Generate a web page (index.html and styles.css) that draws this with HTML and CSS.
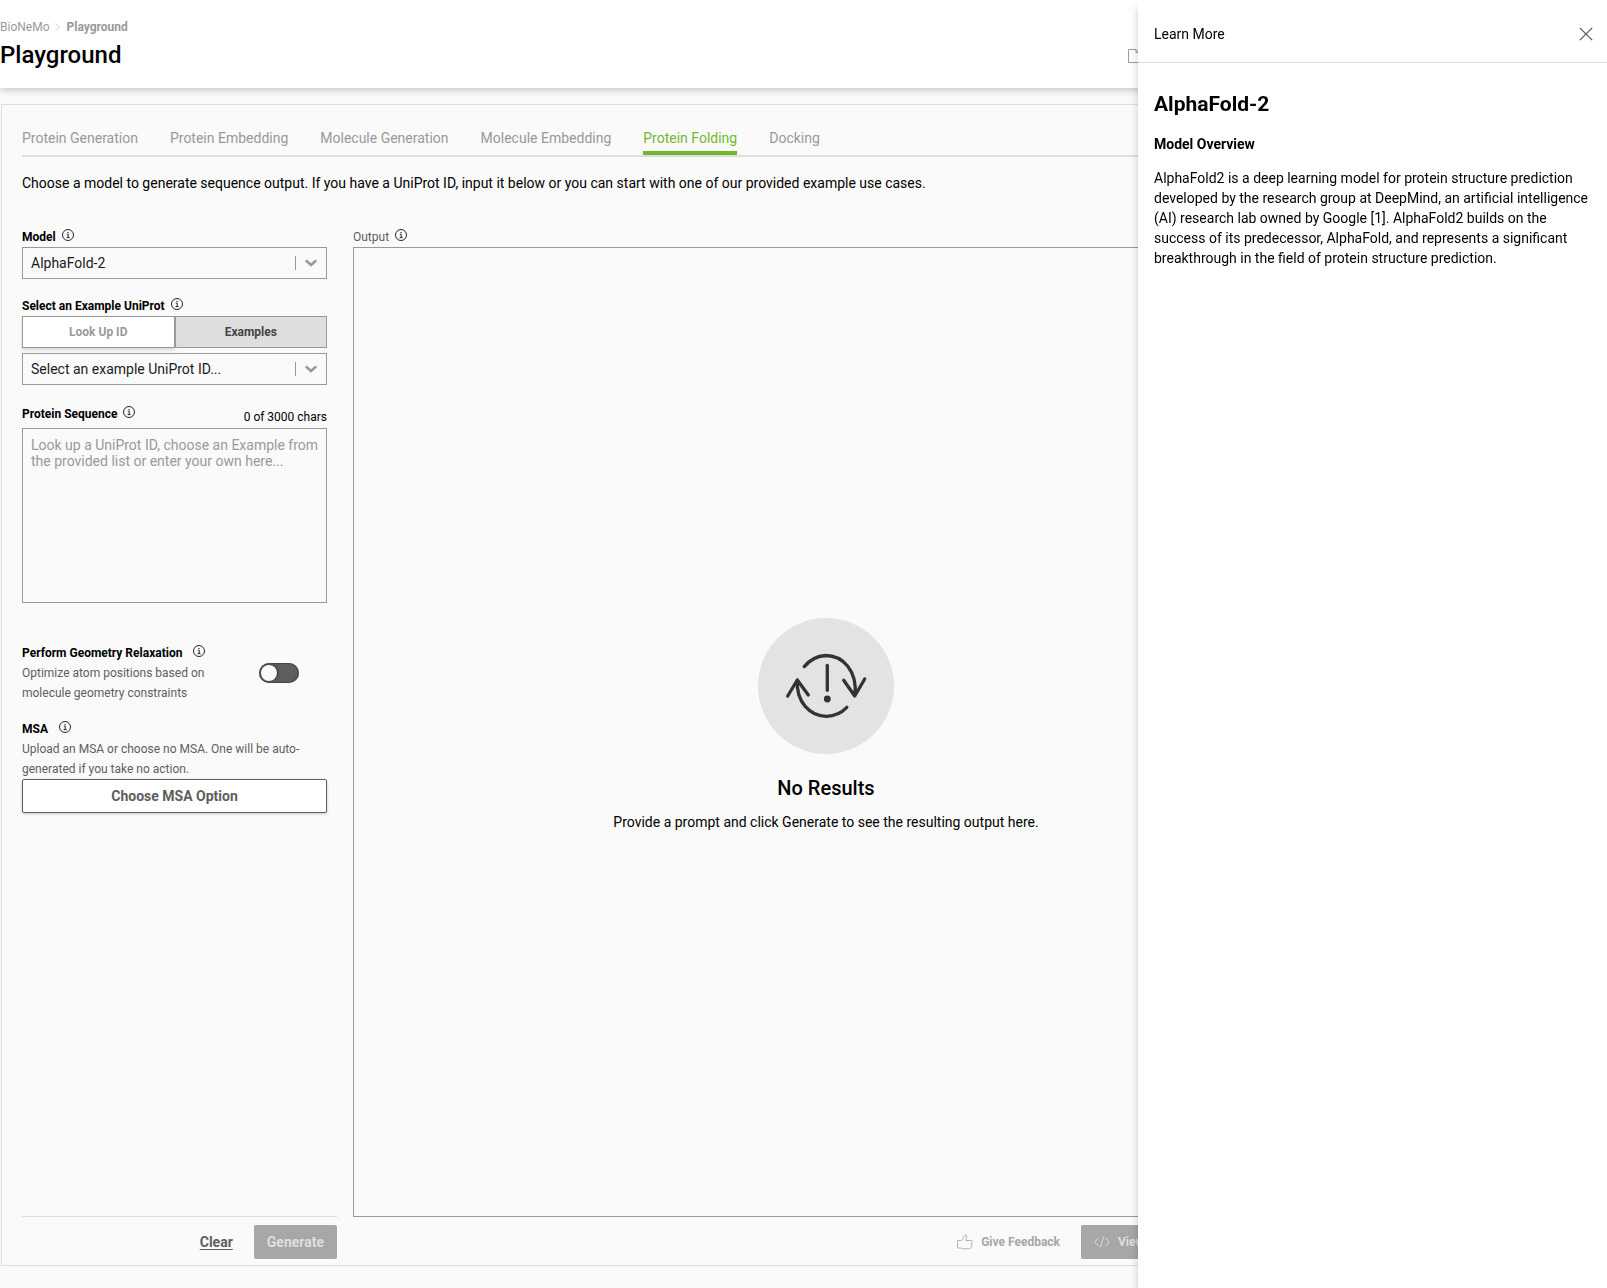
FILE: index.html
```html
<!DOCTYPE html>
<html lang="en">
<head>
<meta charset="utf-8">
<meta name="viewport" content="width=device-width, initial-scale=1">
<title>BioNeMo Playground</title>
<link rel="stylesheet" href="styles.css">
</head>
<body>
<svg class="sprite" width="0" height="0" aria-hidden="true">
  <symbol id="info" viewBox="0 0 12 12">
    <circle cx="6" cy="6" r="5.5" fill="none" stroke="currentColor" stroke-width=".9"/>
    <path d="M4.8 5.2h1.4v3.4M4.6 8.6h3" fill="none" stroke="currentColor" stroke-width=".9"/>
    <path d="M5.5 3h1.1v1.1H5.5z" fill="currentColor"/>
  </symbol>
  <symbol id="chevron" viewBox="0 0 12 8">
    <path d="M1.500 2 6 6l4.500-4" fill="none" stroke="currentColor" stroke-width="2.500" stroke-linecap="round"/>
  </symbol>
</svg>

<div class="app">
  <header class="page-header">
    <div>
      <nav class="breadcrumbs" aria-label="Breadcrumb">
        <a href="#">BioNeMo</a>
        <svg width="5" height="8" viewBox="0 0 5 8" aria-hidden="true"><path d="M.7.5 4.200 4 .7 7.500" fill="none" stroke="#bbb" stroke-width=".7"/></svg>
        <a href="#" class="current">Playground</a>
      </nav>
      <h1>Playground</h1>
    </div>
    <a href="#" class="docs-link" aria-label="Documentation">
      <svg width="14" height="14" viewBox="0 0 14 14" aria-hidden="true"><path d="M.5.500h7.500l4 4v9H.5zM8 .5v3h4" fill="none" stroke="#999"/></svg>
    </a>
  </header>

  <main class="panel">
    <nav class="tabs" aria-label="Tasks">
      <a href="#">Protein Generation</a>
      <a href="#">Protein Embedding</a>
      <a href="#">Molecule Generation</a>
      <a href="#">Molecule Embedding</a>
      <a href="#" class="active">Protein Folding</a>
      <a href="#">Docking</a>
    </nav>
    <p class="intro">Choose a model to generate sequence output. If you have a UniProt ID, input it below or you can start with one of our provided example use cases.</p>

    <div class="columns">
      <form class="inputs">
        <div class="fields">
          <div class="field">
            <div class="label-row"><label for="model">Model</label><svg class="info"><use href="#info"/></svg></div>
            <div class="select">
              <select id="model"><option>AlphaFold-2</option></select>
              <svg class="chevron" aria-hidden="true"><use href="#chevron"/></svg>
            </div>
          </div>

          <div class="field">
            <div class="label-row"><label for="example">Select an Example UniProt</label><svg class="info"><use href="#info"/></svg></div>
            <div class="segmented">
              <button type="button">Look Up ID</button>
              <button type="button" class="selected">Examples</button>
            </div>
            <div class="select">
              <select id="example"><option>Select an example UniProt ID...</option></select>
              <svg class="chevron" aria-hidden="true"><use href="#chevron"/></svg>
            </div>
          </div>

          <div class="field">
            <div class="sequence-head">
              <div class="label-row"><label for="sequence">Protein Sequence</label><svg class="info"><use href="#info"/></svg></div>
              <span class="count">0 of 3000 chars</span>
            </div>
            <textarea id="sequence" placeholder="Look up a UniProt ID, choose an Example from the provided list or enter your own here..."></textarea>
          </div>

          <div class="relaxation">
            <div class="relaxation-text">
              <div class="label-row wide"><label for="relax">Perform Geometry Relaxation</label><svg class="info"><use href="#info"/></svg></div>
              <p class="hint">Optimize atom positions based on molecule geometry constraints</p>
            </div>
            <input type="checkbox" role="switch" id="relax" class="toggle">
          </div>

          <div class="msa">
            <div class="label-row wide"><label for="msa">MSA</label><svg class="info"><use href="#info"/></svg></div>
            <p class="hint">Upload an MSA or choose no MSA. One will be auto-generated if you take no action.</p>
            <button type="button" id="msa" class="outline">Choose MSA Option</button>
          </div>
        </div>
        <div class="form-actions">
          <button type="reset" class="clear">Clear</button>
          <button type="submit" class="generate" disabled>Generate</button>
        </div>
      </form>

      <section class="output">
        <div class="label-row"><span>Output</span><svg class="info"><use href="#info"/></svg></div>
        <div class="result">
          <svg width="136" height="136" viewBox="0 0 136 136" aria-hidden="true">
            <circle cx="68" cy="68" r="68" fill="#e3e3e3"/>
            <g fill="none" stroke="#333" stroke-width="3.300" stroke-linecap="round" stroke-linejoin="round">
              <path d="M46.300 48.600A30 30 0 0 1 67.500 37.500C85 37.500 99.500 53 97 77.500M85.700 62.300l11 15.700 10-17"/>
              <path d="M88.800 89.300A29 29 0 0 1 68.500 98.300C52 98.300 38 84 39.300 62M29.700 78l9.600-16 11 15"/>
              <path d="M69.300 47.300v25"/>
            </g>
            <circle cx="69.300" cy="81" r="3.400" fill="#333"/>
          </svg>
          <h2>No Results</h2>
          <p>Provide a prompt and click Generate to see the resulting output here.</p>
        </div>
        <div class="output-actions">
          <button type="button" class="feedback" disabled>
            <svg width="16" height="16" viewBox="0 0 16 16" aria-hidden="true"><path d="M.5 6.500h4L8 1.200c1-.6 2 0 1.600 1.300L9 6.500h5.600c1 0 1.100 1 .5 1.500l-1 5.500c-.2.800-.8 1.300-1.600 1.300H5.300L3.800 14H.5z" fill="none" stroke="#aaa" stroke-width=".9"/></svg>
            Give Feedback
          </button>
          <button type="button" class="view" disabled>
            <svg width="16" height="12" viewBox="0 0 16 12" aria-hidden="true"><path d="M4.500 2 .7 6l3.800 4M11.500 2l3.800 4-3.800 4M9.700.5l-3.400 11" fill="none" stroke="#ddd"/></svg>
            View Code
          </button>
        </div>
      </section>
    </div>
  </main>
</div>

<aside class="drawer" aria-label="Learn More">
  <div class="drawer-head">
    <span>Learn More</span>
    <button type="button" aria-label="Close">
      <svg width="14" height="14" viewBox="0 0 14 14" aria-hidden="true"><path d="m.8.8 12.400 12.400M13.200.8.8 13.200" stroke="#555" stroke-width="1.200"/></svg>
    </button>
  </div>
  <article class="drawer-body">
    <h2>AlphaFold-2</h2>
    <h3>Model Overview</h3>
    <p>AlphaFold2 is a deep learning model for protein structure prediction developed by the research group at DeepMind, an artificial intelligence (AI) research lab owned by Google [1]. AlphaFold2 builds on the success of its predecessor, AlphaFold, and represents a significant breakthrough in the field of protein structure prediction.</p>
  </article>
</aside>
</body>
</html>
```

FILE: styles.css
```css
* {
  box-sizing: border-box;
}

body {
  margin: 0;
  background: #fafafa;
  color: #000;
  font: 14px/20px Roboto, "Liberation Sans", sans-serif;
}

h1, h2, h3, p {
  margin: 0;
}

button, select, textarea {
  font: inherit;
  margin: 0;
}

button {
  cursor: pointer;
}

a {
  color: inherit;
  text-decoration: none;
}

svg {
  display: block;
  flex: none;
}

.sprite {
  position: absolute;
}

/* Page frame */
.app {
  display: flex;
  flex-direction: column;
  max-width: 1320px;
  min-height: 100vh;
  padding-bottom: 22px;
}

.page-header {
  display: flex;
  justify-content: space-between;
  align-items: flex-end;
  padding: 17px 20px 17px 0;
  background: #fff;
  box-shadow: 0 2px 8px rgba(0, 0, 0, .22);
}

.breadcrumbs {
  display: flex;
  align-items: center;
  gap: 6px;
  font-size: 12px;
  color: #999;
}

.breadcrumbs .current {
  font-weight: 700;
}

h1 {
  margin-top: 2px;
  font-size: 24px;
  line-height: 32px;
  font-weight: 500;
}

.docs-link {
  min-width: 172px;
  padding-bottom: 8px;
}

.panel {
  flex: 1;
  display: flex;
  flex-direction: column;
  margin: 16px 0 0 1px;
  padding: 23px 20px 6px;
  border: 1px solid #dedede;
}

.tabs {
  display: flex;
  gap: 32px;
  border-bottom: 2px solid #dedede;
  color: #999;
}

.tabs a {
  padding-bottom: 3px;
  border-bottom: 4px solid transparent;
}

.tabs .active {
  color: #74b72b;
  border-color: #74b72b;
}

.intro {
  margin: 16px 0 34px;
}

.columns {
  flex: 1;
  display: flex;
  gap: 16px;
}

/* Input form */
.inputs {
  flex: 0 0 315px;
  display: flex;
  flex-direction: column;
}

.fields {
  flex: 1;
  padding-right: 10px;
}

.field {
  margin-bottom: 17px;
}

.label-row {
  display: flex;
  gap: 6px;
  font-size: 12px;
}

.label-row.wide {
  gap: 11px;
}

.label-row label {
  font-weight: 700;
}

.info {
  width: 12px;
  height: 12px;
  margin-top: 2px;
  color: #111;
}

.select {
  position: relative;
}

.select select {
  appearance: none;
  display: block;
  width: 100%;
  height: 32px;
  padding: 0 40px 0 8px;
  border: 1px solid #999;
  border-radius: 0;
  background: linear-gradient(#999, #999) right 30px center / 1px 14px no-repeat;
  color: #1a1a1a;
}

.chevron {
  position: absolute;
  top: 12px;
  right: 10px;
  width: 12px;
  height: 8px;
  color: #999;
  pointer-events: none;
}

.segmented {
  display: flex;
  margin-bottom: 5px;
}

.segmented button {
  flex: 1;
  height: 32px;
  padding: 0;
  border: 1px solid #999;
  background: #fff;
  color: #999;
  font-size: 12px;
  font-weight: 700;
  box-shadow: 0 2px 3px rgba(0, 0, 0, .15);
}

.segmented .selected {
  background: #dedede;
  color: #444;
  box-shadow: none;
}

.sequence-head {
  display: flex;
  justify-content: space-between;
  height: 26px;
  padding: 2px 0 1px;
}

.count {
  align-self: flex-end;
  font-size: 12px;
}

textarea {
  display: block;
  width: 100%;
  height: 175px;
  padding: 8px 4px 8px 8px;
  border: 1px solid #999;
  background: transparent;
  line-height: 16px;
  resize: none;
}

textarea::placeholder {
  color: #999;
}

.relaxation {
  display: flex;
  justify-content: space-between;
  align-items: center;
  margin-top: 40px;
  padding-right: 28px;
}

.relaxation-text {
  flex: 0 0 200px;
}

.hint {
  font-size: 12px;
  color: #5e5e5e;
}

.toggle {
  appearance: none;
  width: 40px;
  height: 20px;
  margin: 0;
  padding: 2px;
  border-radius: 10px;
  background: #5e5e5e;
  box-shadow: inset 0 0 2px #111;
}

.toggle::before {
  content: "";
  display: block;
  width: 16px;
  height: 16px;
  border-radius: 50%;
  background: #fafafa;
  box-shadow: 1px 0 2px rgba(0, 0, 0, .5);
}

.toggle:checked::before {
  margin-left: 20px;
}

.msa {
  margin-top: 16px;
}

.outline {
  width: 100%;
  height: 34px;
  border: 1px solid #5e5e5e;
  border-radius: 2px;
  background: #fff;
  color: #5e5e5e;
  font-weight: 700;
  box-shadow: 0 1px 3px rgba(0, 0, 0, .2);
}

.form-actions {
  display: flex;
  justify-content: flex-end;
  gap: 21px;
  padding-top: 8px;
  border-top: 1px solid #dedede;
}

.clear {
  padding: 0;
  border: 0;
  background: none;
  color: #5e5e5e;
  font-weight: 700;
  text-decoration: underline;
  text-underline-offset: 2px;
}

.generate, .view {
  height: 34px;
  padding: 0 13px;
  border: 0;
  border-radius: 2px;
  background: #a7a7a7;
  color: #dedede;
  font-weight: 700;
}

/* Output */
.output {
  flex: 1;
  display: flex;
  flex-direction: column;
  color: #5e5e5e;
}

.result {
  flex: 1;
  display: flex;
  flex-direction: column;
  align-items: center;
  justify-content: center;
  padding-bottom: 14px;
  border: 1px solid #999;
  color: #000;
}

.result h2 {
  margin: 22px 0 12px;
  font-size: 20px;
  line-height: 24px;
  font-weight: 500;
}

.output-actions {
  display: flex;
  justify-content: flex-end;
  gap: 21px;
  padding-top: 8px;
}

.feedback, .view {
  display: flex;
  align-items: center;
  gap: 8px;
  font-size: 12px;
  font-weight: 700;
}

.feedback {
  padding: 0;
  border: 0;
  background: none;
  color: #a7a7a7;
}

.view {
  min-width: 218px;
}

/* Drawer over the page */
.drawer {
  position: fixed;
  top: 0;
  right: 0;
  bottom: 0;
  width: 469px;
  background: #fff;
  box-shadow: 0 8px 8px rgba(0, 0, 0, .2);
}

.drawer-head {
  display: flex;
  justify-content: space-between;
  align-items: center;
  padding: 24px 14px 18px 16px;
  border-bottom: 1px solid #dedede;
}

.drawer-head button {
  padding: 0;
  border: 0;
  background: none;
}

.drawer-body {
  padding: 27px 16px;
}

.drawer-body h2 {
  font-size: 21px;
  line-height: 28px;
  font-weight: 700;
}

.drawer-body h3 {
  margin: 16px 0 14px;
  font-size: 14px;
  font-weight: 700;
}
```
